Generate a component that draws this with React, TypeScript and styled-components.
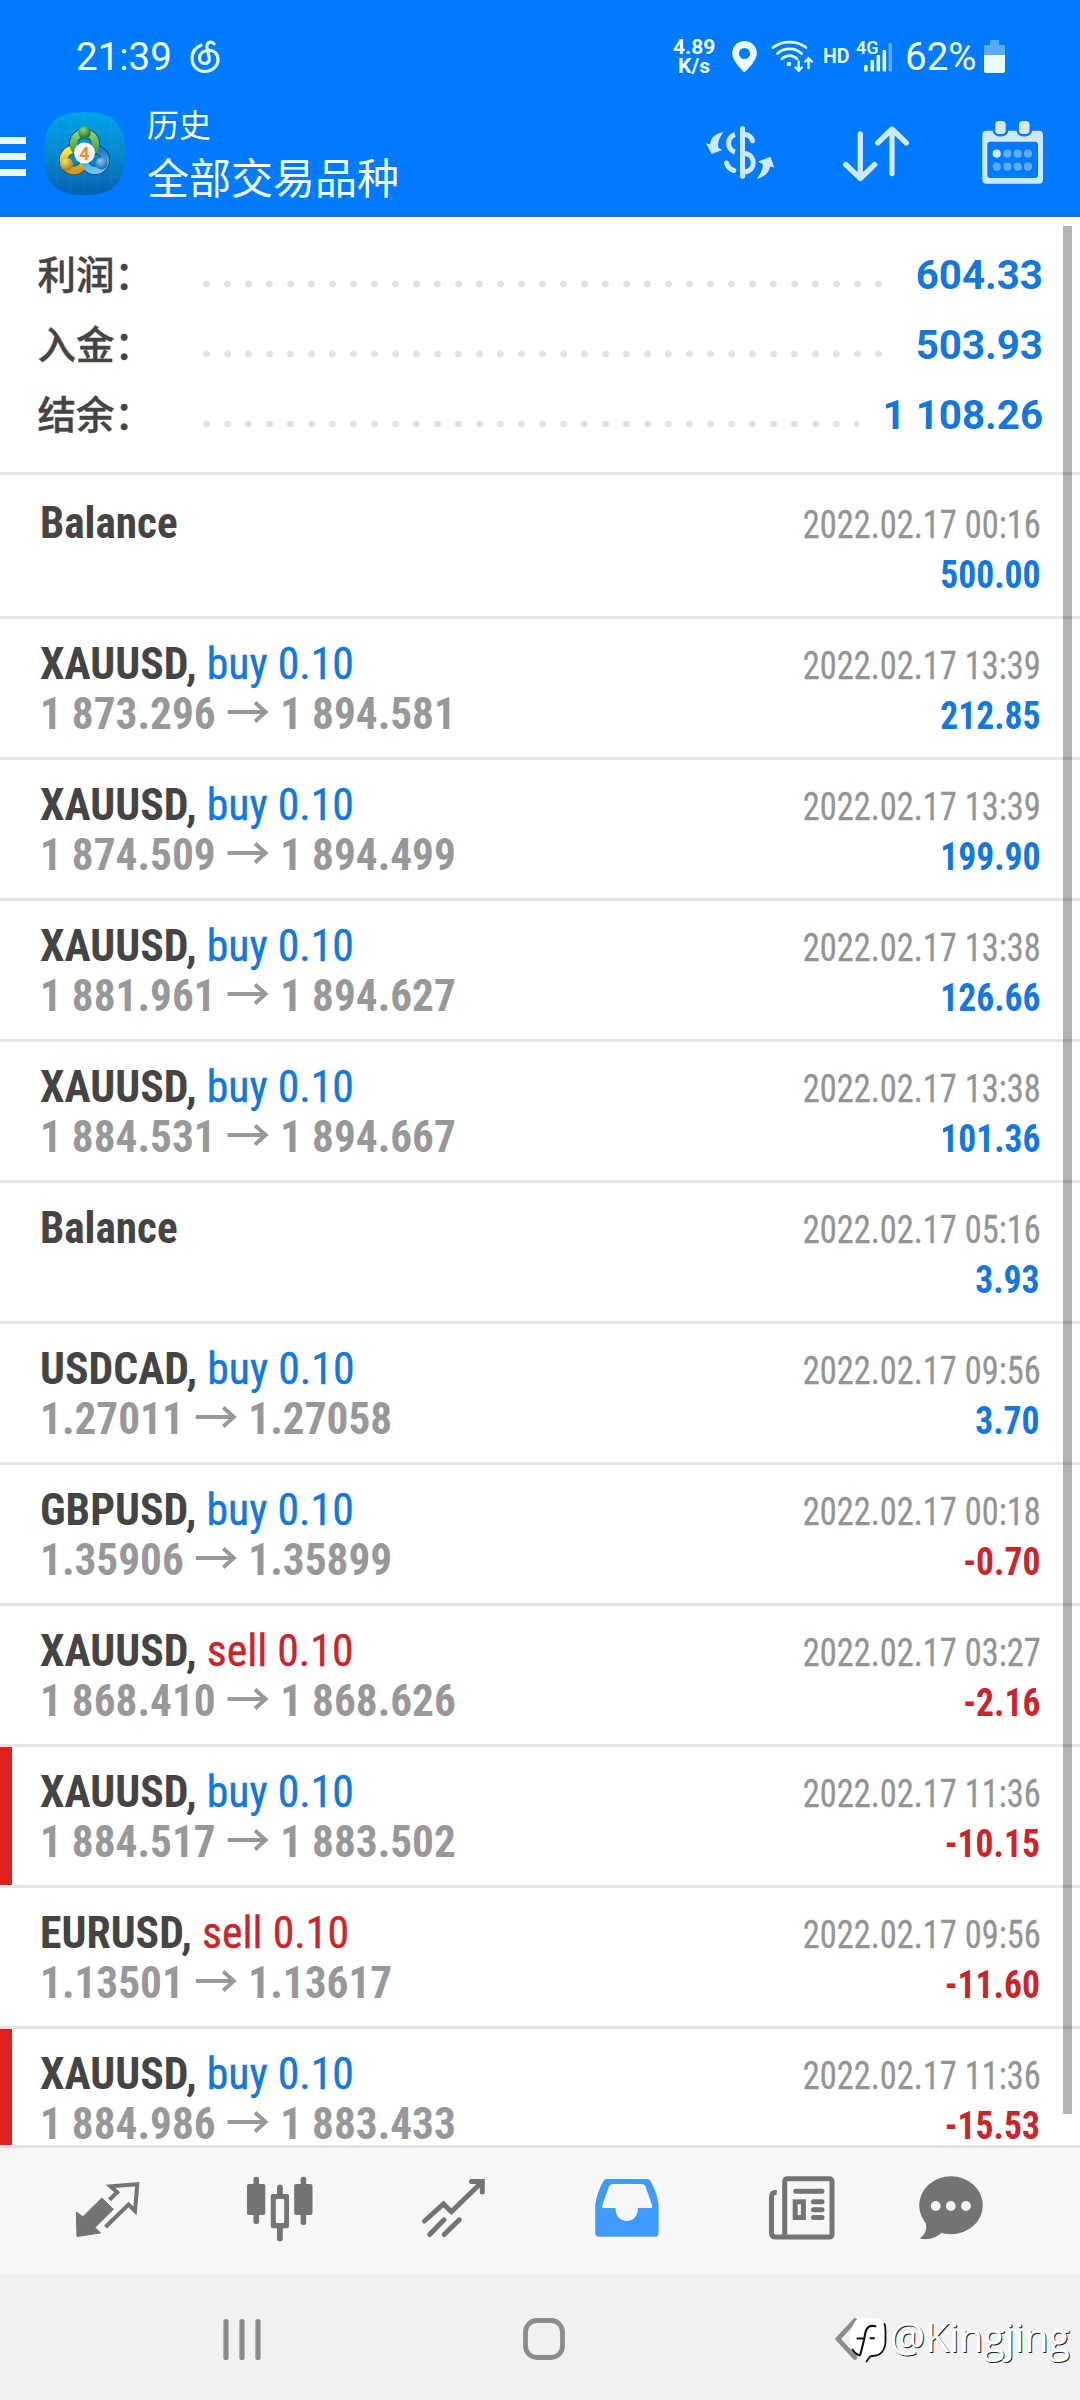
import React from "react";
import styled, { createGlobalStyle } from "styled-components";

const Global = createGlobalStyle`
  html, body { margin: 0; padding: 0; }
  body { width: 1080px; height: 2400px; overflow: hidden; background: #fff; }
  * { box-sizing: border-box; }
  svg { display: block; flex: none; overflow: visible; }
`;

const BLUE = "#1377e0";
const RED = "#c9252b";

const Screen = styled.div`
  position: relative;
  display: flex;
  flex-direction: column;
  width: 1080px;
  height: 2400px;
  overflow: hidden;
  background: #fff;
  font-family: Roboto, "Noto Sans CJK SC", sans-serif;
`;

const Header = styled.header`
  height: 217px;
  flex: none;
  background: #007aff;
  border-bottom: 2px solid #1b72c8;
  color: #f2ffff;
`;

const StatusBar = styled.div`
  display: flex;
  align-items: center;
  height: 82px;
  padding: 31px 75px 0 76px;
`;

const Clock = styled.span`
  font-size: 38.5px;
  line-height: 50px;
  width: 113.5px;
`;

const StatusRight = styled.div`
  display: flex;
  align-items: center;
  margin-left: auto;
`;

const Speed = styled.div`
  width: 42px;
  font-size: 21px;
  line-height: 19px;
  font-weight: 700;
  text-align: center;
  margin-right: 17px;
`;

const Tag = styled.span`
  font-size: 19.5px;
  font-weight: 600;
  line-height: 24px;
  margin-left: 9px;
  width: 33px;
`;

const Percent = styled.span`
  font-size: 38.5px;
  line-height: 50px;
  margin-left: 11px;
  width: 79px;
  white-space: nowrap;
`;

const AppBar = styled.div`
  display: flex;
  align-items: center;
  height: 133px;
`;

const Burger = styled.div`
  display: flex;
  flex-direction: column;
  gap: 9px;
  width: 26px;
  margin: 15px 18px 0 0;
`;

const BurgerLine = styled.i`
  height: 7px;
  background: #e8fcff;
`;

const LogoSlot = styled.div`
  padding-top: 10px;
`;

const Titles = styled.div`
  margin-left: 22px;
  padding-top: 19px;
  flex: 1;
`;

const Kicker = styled.div`
  font-size: 32px;
  line-height: 42px;
  margin-top: 2px;
`;

const Title = styled.div`
  font-size: 42px;
  line-height: 66px;
`;

const Tools = styled.div`
  display: flex;
  gap: 60px;
  padding: 9px 30px 0 0;
  color: #cde8ff;
`;

const Body = styled.main`
  position: relative;
  height: 1928px;
  flex: none;
  overflow: hidden;
`;

const Summary = styled.section`
  height: 258px;
  padding: 23px 37px 0 37.5px;
  border-bottom: 3px solid #e4e4e4;
`;

const SummaryRow = styled.div`
  display: flex;
  height: 70px;
  align-items: center;
`;

const Label = styled.span`
  width: 158px;
  flex: none;
  font-family: "Noto Sans CJK SC", sans-serif;
  font-weight: 500;
  font-size: 38.5px;
  line-height: 60px;
  padding-bottom: 6px;
  color: #444;
  -webkit-text-stroke: 0.4px #444;
`;

const Dots = styled.span`
  flex: 1;
  height: 8px;
  margin: 17px 24px 0 0;
  background: radial-gradient(circle at 10.5px 4px, #e1e1e1 3px, transparent 3.8px) 0 0 / 21px 8px repeat-x;
`;

const Total = styled.span`
  font-weight: 700;
  font-size: 40.3px;
  line-height: 60px;
  padding-top: 2px;
  color: ${BLUE};
`;

const Deals = styled.section`
  padding-top: 3px;
`;

const Row = styled.div<{ $flag?: boolean }>`
  display: flex;
  justify-content: space-between;
  height: 141px;
  padding: 20px 40px 0 40px;
  border-bottom: 3px solid #e4e4e4;
  font-stretch: 75%;
  ${(p) => p.$flag && "box-shadow: inset 12px 0 0 #df201f;"}
`;

const Side = styled.div<{ $right?: boolean }>`
  display: flex;
  flex-direction: column;
  align-items: ${(p) => (p.$right ? "flex-end" : "flex-start")};
  padding-top: ${(p) => (p.$right ? 2 : 0)}px;
`;

const Symbol = styled.div<{ $plain?: boolean }>`
  font-size: 45px;
  line-height: 50px;
  height: 50px;
  font-weight: 700;
  color: #444;
  white-space: nowrap;
  transform: scaleX(${(p) => (p.$plain ? 0.96 : 0.972)});
  transform-origin: left;
`;

const Op = styled.span<{ $sell?: boolean }>`
  font-weight: 400;
  color: ${(p) => (p.$sell ? RED : BLUE)};
  -webkit-text-stroke: 0.4px;
`;

const Prices = styled.div`
  display: flex;
  font-size: 45px;
  line-height: 50px;
  height: 50px;
  font-weight: 700;
  color: #98989a;
  white-space: nowrap;
  transform: scaleX(0.962);
  transform-origin: left;
`;

const ArrowBox = styled.span`
  margin: 12px 12px 0 12px;
`;

const DateText = styled.div`
  font-size: 38.5px;
  line-height: 50px;
  height: 50px;
  color: #949494;
  white-space: nowrap;
  transform: translateX(0.5px) scaleX(0.894);
  transform-origin: right;
  -webkit-text-stroke: 0.3px;
`;

const Amount = styled.div<{ $neg?: boolean }>`
  font-size: 38.5px;
  line-height: 50px;
  font-weight: 700;
  color: ${(p) => (p.$neg ? RED : BLUE)};
  transform: scaleX(0.925);
  transform-origin: right;
`;

const ScrollThumb = styled.div`
  position: absolute;
  right: 8px;
  top: 9px;
  width: 9px;
  height: 1888px;
  background: rgba(0, 0, 0, 0.3);
`;

const TabBar = styled.nav`
  display: grid;
  grid-template-columns: repeat(5, 173.5px) 125px;
  justify-items: center;
  height: 128px;
  flex: none;
  padding: 22px 0 0 21px;
  border-top: 3px solid #e2e2e2;
  background: #f7f7f7;
  color: #747474;
`;

const SystemBar = styled.footer`
  position: relative;
  display: flex;
  height: 127px;
  flex: none;
  padding-top: 41px;
  background: #f1f1f1;
  color: #8c8c8c;
`;

const KeySlot = styled.div<{ $w: number; $left: number }>`
  width: ${(p) => p.$w}px;
  margin-left: ${(p) => p.$left}px;
`;

const Watermark = styled.div`
  position: absolute;
  left: 846px;
  top: 39px;
  display: flex;
  align-items: center;
  gap: 2px;
  color: #fff;
  font-family: "Open Sans", sans-serif;
  font-size: 39.3px;
  line-height: 50px;
  font-weight: 400;
  white-space: nowrap;
  text-shadow: 1px 1px 0.3px #222;
`;

type Deal = { s: string; op?: string; a?: string; b?: string; d: string; v: string; flag?: boolean };

const deals: Deal[] = [
  { s: "Balance", d: "2022.02.17 00:16", v: "500.00" },
  { s: "XAUUSD", op: "buy 0.10", a: "1 873.296", b: "1 894.581", d: "2022.02.17 13:39", v: "212.85" },
  { s: "XAUUSD", op: "buy 0.10", a: "1 874.509", b: "1 894.499", d: "2022.02.17 13:39", v: "199.90" },
  { s: "XAUUSD", op: "buy 0.10", a: "1 881.961", b: "1 894.627", d: "2022.02.17 13:38", v: "126.66" },
  { s: "XAUUSD", op: "buy 0.10", a: "1 884.531", b: "1 894.667", d: "2022.02.17 13:38", v: "101.36" },
  { s: "Balance", d: "2022.02.17 05:16", v: "3.93" },
  { s: "USDCAD", op: "buy 0.10", a: "1.27011", b: "1.27058", d: "2022.02.17 09:56", v: "3.70" },
  { s: "GBPUSD", op: "buy 0.10", a: "1.35906", b: "1.35899", d: "2022.02.17 00:18", v: "-0.70" },
  { s: "XAUUSD", op: "sell 0.10", a: "1 868.410", b: "1 868.626", d: "2022.02.17 03:27", v: "-2.16" },
  { s: "XAUUSD", op: "buy 0.10", a: "1 884.517", b: "1 883.502", d: "2022.02.17 11:36", v: "-10.15", flag: true },
  { s: "EURUSD", op: "sell 0.10", a: "1.13501", b: "1.13617", d: "2022.02.17 09:56", v: "-11.60" },
  { s: "XAUUSD", op: "buy 0.10", a: "1 884.986", b: "1 883.433", d: "2022.02.17 11:36", v: "-15.53", flag: true },
];

const MusicIcon = () => (
  <svg width="30" height="34" viewBox="0 0 30 34" fill="none" stroke="#dffaff" strokeWidth="3.2" strokeLinecap="round">
    <path d="M11 5.2C5.500 7.500 2 12.500 2 18.500 2 26 7.800 31.500 15 31.500S28 26 28 19.500C28 13 23 9.800 18 10.300 12.500 10.800 9.500 14 9.500 18 9.500 21.500 12 23.500 14.700 23.500 17.800 23.500 19.800 21 19.300 18L17 7.500C16.500 4.500 17.800 2.500 20 2.200 21.800 2 23 2.700 24 3.800" />
  </svg>
);

const PinIcon = () => (
  <svg width="25" height="32" viewBox="0 0 25 32">
    <path fill="#eafdff" fillRule="evenodd" d="M12.500 0A12.300 12.300 0 0 0 .2 12.300C.2 20.500 12.500 31.500 12.500 31.500S24.800 20.500 24.800 12.300A12.300 12.300 0 0 0 12.500 0Zm0 7a5.500 5.500 0 1 1 0 11 5.500 5.500 0 0 1 0-11Z" />
  </svg>
);

const WifiIcon = () => (
  <svg width="43" height="33" viewBox="0 0 43 33" fill="none" stroke="#dffaff" strokeWidth="2.800" strokeLinecap="round">
    <path d="M2 7.500C11 .2 26 .2 35 7.500M6.500 13.500C13 7.300 24 7.300 30.500 13.500M11 18.800C15.500 14.500 21.500 14.500 26 18.800" />
    <circle cx="18" cy="24" r="2.300" fill="#dffaff" stroke="none" />
    <path strokeWidth="2.400" d="M27.700 21.500V30.500M24.500 27.500L27.700 30.700 30.900 27.500M37.500 28V18.500M34.300 21.500L37.500 18.300 40.700 21.500" />
  </svg>
);

const SignalIcon = () => (
  <svg width="38" height="33" viewBox="0 0 38 33">
    <g fill="#dffaff">
      <rect x="8" y="25" width="3.600" height="6.500" rx="1" />
      <rect x="14.500" y="20" width="3.600" height="11.500" rx="1" />
      <rect x="20.500" y="15" width="3.600" height="16.500" rx="1" />
      <rect x="26.500" y="10" width="3.600" height="21.500" rx="1" />
      <rect x="32.500" y="3" width="3.600" height="28.500" rx="1" opacity="0.400" />
      <text x="0" y="14" fontFamily="Roboto, sans-serif" fontSize="18" fontWeight="600">4G</text>
    </g>
  </svg>
);

const BatteryIcon = () => (
  <svg width="21" height="33" viewBox="0 0 21 33">
    <path fill="#5aa9ff" d="M6 0H15V5H20Q21 5 21 6.500V15H0V6.500Q0 5 1 5H6Z" />
    <path fill="#eafdff" d="M0 15H21V31Q21 33 19 33H2Q0 33 0 31Z" />
  </svg>
);

const Logo = () => (
  <svg width="81" height="83" viewBox="0 0 81 83">
    <defs>
      <linearGradient id="tile" x1="0" y1="0" x2="0" y2="1">
        <stop offset="0" stopColor="#00a3ea" />
        <stop offset="0.500" stopColor="#0688cf" />
        <stop offset="1" stopColor="#0560b4" />
      </linearGradient>
      <linearGradient id="green" x1="0" y1="0" x2="0" y2="1">
        <stop offset="0" stopColor="#8fcf7e" />
        <stop offset="1" stopColor="#2c9440" />
      </linearGradient>
      <linearGradient id="gold" x1="0" y1="0" x2="0" y2="1">
        <stop offset="0" stopColor="#f5ea50" />
        <stop offset="1" stopColor="#cf9a1e" />
      </linearGradient>
      <linearGradient id="sky" x1="0" y1="0" x2="0" y2="1">
        <stop offset="0" stopColor="#1d78c4" />
        <stop offset="1" stopColor="#72c4f4" />
      </linearGradient>
      <radialGradient id="gball" cx="0.400" cy="0.300" r="0.700">
        <stop offset="0" stopColor="#8ed484" />
        <stop offset="1" stopColor="#17702c" />
      </radialGradient>
      <radialGradient id="yball" cx="0.400" cy="0.300" r="0.700">
        <stop offset="0" stopColor="#f4e56a" />
        <stop offset="1" stopColor="#a87a12" />
      </radialGradient>
      <radialGradient id="bball" cx="0.400" cy="0.300" r="0.700">
        <stop offset="0" stopColor="#8fd0f6" />
        <stop offset="1" stopColor="#1966ac" />
      </radialGradient>
    </defs>
    <path fill="url(#tile)" d="M40.500 0C70 0 81 12 81 41.500S70 83 40.500 83 0 71 0 41.500 11 0 40.500 0Z" />
    <path stroke="#fff" strokeOpacity="0.050" fill="none" d="M13 8V75M26 2V81M40.500 0V83M54 2V81M67 8V75M4 20H77M0 35H81M0 50H81M4 65H77" />
    <g fill="none" strokeWidth="7.500">
      <circle cx="30" cy="48" r="10.500" stroke="#5f4a0c" strokeWidth="9" />
      <circle cx="51" cy="48" r="10.500" stroke="#0b3f72" strokeWidth="9" />
      <circle cx="40.500" cy="32" r="11" stroke="#0e4a23" strokeWidth="9" />
      <circle cx="30" cy="48" r="10.500" stroke="url(#gold)" />
      <circle cx="51" cy="48" r="10.500" stroke="url(#sky)" />
      <circle cx="40.500" cy="32" r="11" stroke="url(#green)" />
    </g>
    <circle cx="40.500" cy="20.500" r="6.300" fill="url(#gball)" />
    <circle cx="22.500" cy="52" r="6.500" fill="url(#yball)" />
    <circle cx="57.500" cy="51.500" r="6" fill="url(#bball)" />
    <circle cx="40.500" cy="41" r="10.500" fill="#fbf6f2" />
    <text x="40.500" y="47.500" textAnchor="middle" fontFamily="Roboto, sans-serif" fontWeight="700" fontSize="18" fill="#f0883a">4</text>
  </svg>
);

const DollarIcon = () => (
  <svg width="76" height="76" viewBox="0 0 76 76" fill="none" stroke="currentColor" strokeWidth="5" strokeLinecap="round">
    <path d="M40.500 13.500V61.200" />
    <path strokeLinecap="butt" d="M33 19.500C24.500 22 24.500 34.500 33 37M43 38.500C54 40 54 55.500 43 57" />
    <path d="M43 19.500C47.500 20 49.500 22.500 50.500 25.800M24.500 48C25.500 51.500 28.500 54.500 31.800 55.500" />
    <path fill="currentColor" stroke="none" d="M21.300 17.300C13 18.300 8.700 23.300 8 29.300L4 28.300 9.700 39 20.300 35 16.300 32.700C15.300 26.700 18 21.700 21.300 17.300ZM54.700 64C64 61 67 57 68 51.500L72.300 52.500 68.500 41.700 56 46.500 60.500 49C61.500 54 58 59.500 54.700 64Z" />
  </svg>
);

const SortIcon = () => (
  <svg width="76" height="76" viewBox="0 0 76 76" fill="none" stroke="currentColor" strokeWidth="5.300" strokeLinecap="round" strokeLinejoin="round">
    <path d="M22.300 19V63M7.700 49.500L22.300 63.500 36.700 49.500M54 58.500V14.500M39.700 28L54 14 68.300 28" />
  </svg>
);

const CalendarIcon = () => (
  <svg width="76" height="76" viewBox="0 0 76 76" fill="currentColor">
    <path fillRule="evenodd" d="M12.300 15.700H65Q69 15.700 69 19.700V64.700Q69 68.700 65 68.700H12.300Q8.300 68.700 8.300 64.700V19.700Q8.300 15.700 12.300 15.700ZM16.300 26.700Q13.300 26.700 13.300 29.700V60Q13.300 63 16.300 63H61Q64 63 64 60V29.700Q64 26.700 61 26.700Z" />
    <g stroke="#007aff" strokeWidth="2.500" fill="#dbe7ee">
      <rect x="20" y="4.800" width="13" height="15.400" rx="5" />
      <rect x="43.800" y="4.800" width="13" height="15.400" rx="5" />
    </g>
    {[38.7, 51.7].map((y) =>
      [22.7, 33.3, 43.7, 54].map((x) => (
        <circle key={`${x}-${y}`} cx={x} cy={y} r="4.100" opacity={x === 22.7 && y === 38.7 ? 1 : 0.45} />
      ))
    )}
  </svg>
);

const PriceArrow = () => (
  <ArrowBox>
    <svg width="43" height="22" viewBox="0 0 43 22" fill="none" stroke="currentColor" strokeWidth="4">
      <path d="M0 11H40M28.500 1.500L39.500 11 28.500 20.500" />
    </svg>
  </ArrowBox>
);

const QuotesIcon = () => (
  <svg width="76" height="76" viewBox="0 0 76 76">
    <path fill="currentColor" stroke="currentColor" strokeWidth="1" strokeLinejoin="round" d="M6.300 42L12.900 46.700 31.800 28 43.400 39.300 25 57.500 30.500 63 7 66.500Z" />
    <path fill="none" stroke="currentColor" strokeWidth="4" d="M39.500 29.800L47.200 22.300 40.500 16.300 67.300 14.200 65 41 58.500 34.500 35.500 57" />
  </svg>
);

const CandlesIcon = () => (
  <svg width="76" height="76" viewBox="0 0 76 76" fill="currentColor">
    <rect x="4" y="14" width="18.300" height="31" rx="2" />
    <rect x="10.500" y="6.700" width="5.600" height="47.300" rx="2.500" />
    <path fillRule="evenodd" d="M29.800 24H44Q46 24 46 26V56.300Q46 58.300 44 58.300H29.800Q27.800 58.300 27.800 56.300V26Q27.800 24 29.800 24ZM32.800 30V52Q32.800 53 33.800 53H40.200Q41.200 53 41.200 52V30Q41.200 29 40.200 29H33.800Q32.800 29 32.800 30Z" />
    <path d="M34 26V17.500a2.900 2.900 0 0 1 5.800 0V26ZM34 57V68.500a2.900 2.900 0 0 0 5.800 0V57Z" />
    <rect x="51.200" y="14" width="18.300" height="31" rx="2" />
    <rect x="57.600" y="6.700" width="5.600" height="48.300" rx="2.500" />
  </svg>
);

const TrendIcon = () => (
  <svg width="76" height="76" viewBox="0 0 76 76" fill="none" stroke="currentColor" strokeWidth="5" strokeLinecap="round">
    <path d="M7.500 51L26.500 34 34.300 41.700 65 12M54.500 11.500H65.300V22M12.700 64.500L27 49.800M27.200 64.500L42.300 49.800" />
  </svg>
);

const InboxIcon = () => (
  <svg width="76" height="76" viewBox="0 0 76 76">
    <path fill="#3f9bfb" fillRule="evenodd" d="M5.200 36C5.800 28 10 17 13.500 11 14.500 9.300 15.500 9 17.500 9H56.500C58.500 9 59.500 9.500 60.500 11 64 17 68 27 68.600 35V63Q68.600 66.700 65 66.700H9Q5.200 66.700 5.200 63ZM23 14Q20 14 19 16.500L12 36Q11.500 38 13 38H25.500C25.500 46 30 51 36.700 51S48 46 48 38H61Q62.600 38 62.300 36L55.500 16.500Q54.500 14 52 14Z" />
  </svg>
);

const NewsIcon = () => (
  <svg width="76" height="76" viewBox="0 0 76 76" fill="none" stroke="currentColor" strokeWidth="5" strokeLinecap="round">
    <rect x="20.700" y="8.800" width="47.300" height="58.300" rx="2.500" />
    <path d="M12.800 22.500Q7.500 22 7.500 26.500V63Q7.500 67.100 12 67.100H22" strokeLinecap="butt" />
    <path d="M31.700 21.300H58M49.500 31.700H58M49.500 39.700H58M49.500 47.500H58" />
    <rect x="31.200" y="31.800" width="8.200" height="15.700" />
  </svg>
);

const ChatIcon = () => (
  <svg width="76" height="76" viewBox="0 0 76 76" fill="currentColor">
    <ellipse cx="38" cy="35.300" rx="31.800" ry="29" />
    <path d="M12 50C15.500 60 11 65.500 6.500 68.500 16 71 24 67 29 62.500Z" />
    <g fill="#f7f7f7">
      <circle cx="22.700" cy="36" r="4.900" />
      <circle cx="37.800" cy="36" r="4.900" />
      <circle cx="53" cy="36" r="4.900" />
    </g>
  </svg>
);

const BubbleMark = () => (
  <svg width="42" height="46" viewBox="0 0 42 46">
    <path fill="#fff" d="M10 6Q12 4 17 4L31 4.500Q38.500 5.500 39 13V29Q38.500 40 31 42L25 43 20 47 13 42.500Q6 37 4 29 2 17 10 6Z" />
    <path fill="none" stroke="#111" strokeWidth="1.800" strokeLinecap="round" strokeLinejoin="round" d="M38.500 10Q39.500 12 39.500 17V28Q39 37 33 40.500 30 42 26 42 24 42 22.500 44.500L20.500 47.500M6.500 35.500Q9 40 13.500 41.500" />
    <path fill="none" stroke="#111" strokeWidth="2.100" strokeLinecap="round" d="M29.500 12.300Q21 10 19.300 19L18 26 14.200 41M11.500 24.500H17M24.500 24.200H28" />
  </svg>
);

export default function App() {
  return (
    <Screen>
      <Global />
      <Header>
        <StatusBar>
          <Clock>21:39</Clock>
          <MusicIcon />
          <StatusRight>
            <Speed>
              <div>4.89</div>
              <div>K/s</div>
            </Speed>
            <PinIcon />
            <KeySlot $w={43} $left={14}>
              <WifiIcon />
            </KeySlot>
            <Tag>HD</Tag>
            <SignalIcon />
            <Percent>62%</Percent>
            <BatteryIcon />
          </StatusRight>
        </StatusBar>
        <AppBar>
          <Burger>
            <BurgerLine />
            <BurgerLine />
            <BurgerLine />
          </Burger>
          <LogoSlot>
            <Logo />
          </LogoSlot>
          <Titles>
            <Kicker>历史</Kicker>
            <Title>全部交易品种</Title>
          </Titles>
          <Tools>
            <DollarIcon />
            <SortIcon />
            <CalendarIcon />
          </Tools>
        </AppBar>
      </Header>
      <Body>
        <Summary>
          {[
            ["利润：", "604.33"],
            ["入金：", "503.93"],
            ["结余：", "1 108.26"],
          ].map(([label, total]) => (
            <SummaryRow key={label}>
              <Label>{label}</Label>
              <Dots />
              <Total>{total}</Total>
            </SummaryRow>
          ))}
        </Summary>
        <Deals>
          {deals.map((deal, i) => (
            <Row key={i} $flag={deal.flag}>
              <Side>
                <Symbol $plain={!deal.op}>
                  {deal.s}
                  {deal.op && (
                    <>
                      , <Op $sell={deal.op.startsWith("sell")}>{deal.op}</Op>
                    </>
                  )}
                </Symbol>
                {deal.a && (
                  <Prices>
                    {deal.a}
                    <PriceArrow />
                    {deal.b}
                  </Prices>
                )}
              </Side>
              <Side $right>
                <DateText>{deal.d}</DateText>
                <Amount $neg={deal.v.startsWith("-")}>{deal.v}</Amount>
              </Side>
            </Row>
          ))}
        </Deals>
        <ScrollThumb />
      </Body>
      <TabBar>
        <QuotesIcon />
        <CandlesIcon />
        <TrendIcon />
        <InboxIcon />
        <NewsIcon />
        <ChatIcon />
      </TabBar>
      <SystemBar>
        <KeySlot $w={44} $left={220}>
          <svg width="44" height="50" viewBox="0 0 44 50" stroke="currentColor" strokeWidth="5.200" strokeLinecap="round">
            <path d="M6 7.500V43.500M22 7.500V43.500M38 7.500V43.500" />
          </svg>
        </KeySlot>
        <KeySlot $w={50} $left={255}>
          <svg width="50" height="50" viewBox="0 0 50 50" fill="none" stroke="currentColor" strokeWidth="4.800">
            <rect x="6.500" y="6.500" width="37" height="37" rx="11.500" />
          </svg>
        </KeySlot>
        <KeySlot $w={50} $left={261}>
          <svg width="50" height="50" viewBox="0 0 50 50" fill="none" stroke="currentColor" strokeWidth="4.800" strokeLinecap="round">
            <path d="M25 6.500L8 25 25 43.500" />
          </svg>
        </KeySlot>
        <Watermark>
          <BubbleMark />
          <span>@Kingjing</span>
        </Watermark>
      </SystemBar>
    </Screen>
  );
}
